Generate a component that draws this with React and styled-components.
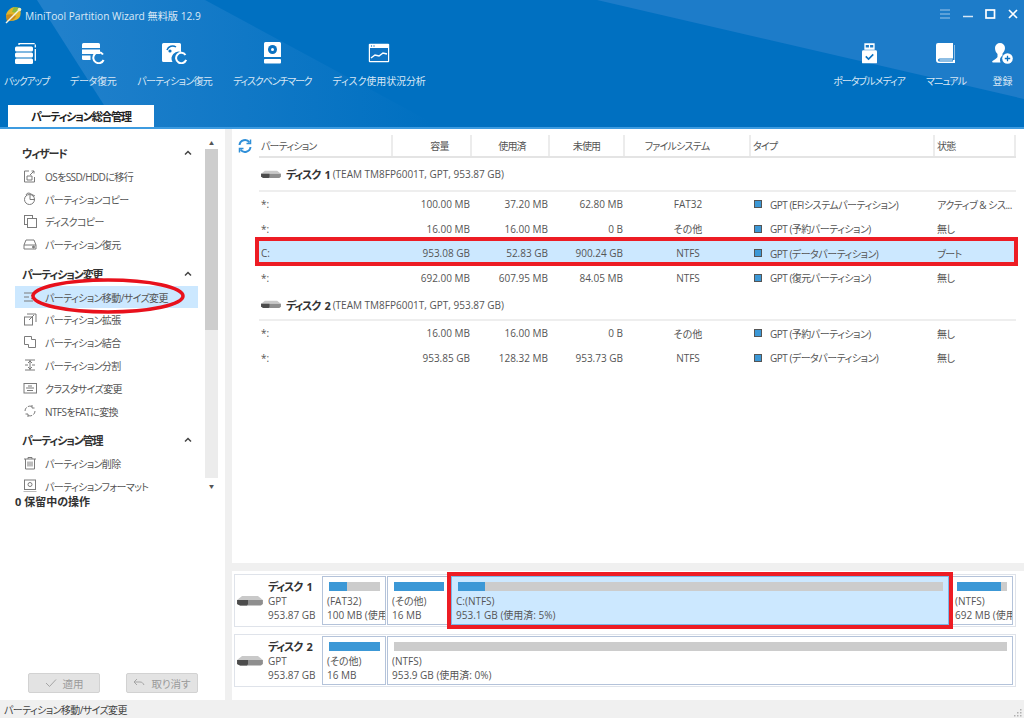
import styled, { createGlobalStyle } from 'styled-components';

const GlobalStyle = createGlobalStyle`
  html, body {
    margin: 0;
    padding: 0;
    background: #f0f0f0;
    overflow: hidden;
  }
  * {
    box-sizing: border-box;
  }
  body {
    font-family: "Open Sans", "Noto Sans CJK JP", sans-serif;
    font-feature-settings: "palt";
    font-size: 10px;
    color: #555;
  }
`;

/* toolbar icons */
const BackupIcon = () => (
  <svg width="22" height="21" viewBox="0 0 22 21" fill="#fff">
    <rect x="0" y="3.500" width="18" height="5" rx="1.500" />
    <rect x="0" y="9.500" width="18" height="5" rx="1.500" />
    <rect x="0" y="15.500" width="18" height="5.500" rx="1.500" />
    <path d="M4 2V.7h16.300v17" fill="none" stroke="#fff" strokeWidth="1.300" strokeDasharray="17 1.500 3 1.500" />
  </svg>
);

const DataIcon = () => (
  <svg width="23" height="22" viewBox="0 0 23 22" fill="#fff">
    <path d="M0 2.500A1.500 1.500 0 0 1 1.500 1h15A1.500 1.500 0 0 1 18 2.500V6H0z" />
    <rect x="0" y="7.500" width="18" height="4.500" />
    <path d="M0 13.500h8.500V18H1.500A1.500 1.500 0 0 1 0 16.500z" />
    <path d="M21 12.500a5.400 5.400 0 1 0 .6 5.500" fill="none" stroke="#fff" strokeWidth="2" />
  </svg>
);

const PartitionIcon = () => (
  <svg width="25" height="22" viewBox="0 0 25 22" fill="#fff">
    <path d="M0 2.500A1.500 1.500 0 0 1 1.500 1h16A1.500 1.500 0 0 1 19 2.500V10a7 7 0 0 0-8.500 10H1.500A1.500 1.500 0 0 1 0 18.500z" />
    <path d="M5 8a6 6 0 0 1 9-3" fill="none" stroke="#0a72c2" strokeWidth="1.500" />
    <circle cx="8" cy="9" r="1.600" fill="#0a72c2" />
    <path d="M23.500 13a5.200 5.200 0 1 0 .6 5" fill="none" stroke="#fff" strokeWidth="2" />
  </svg>
);

const BenchIcon = () => (
  <svg width="17" height="22" viewBox="0 0 17 22" fill="#fff">
    <path d="M1.500 0h14A1.500 1.500 0 0 1 17 1.500V15H0V1.500A1.500 1.500 0 0 1 1.500 0z" />
    <rect x="0" y="17" width="17" height="4.500" rx="1" />
    <circle cx="8.500" cy="7.500" r="4.500" fill="#0a72c2" />
    <circle cx="8.500" cy="7.500" r="1.500" fill="#fff" />
  </svg>
);

const UsageIcon = () => (
  <svg width="22" height="20" viewBox="0 0 22 20">
    <rect x="0.800" y="0.800" width="20.400" height="18.400" rx="1" fill="#fff" />
    <rect x="2" y="5" width="18" height="13" fill="#0f74c4" />
    <circle cx="3.500" cy="3" r="0.700" fill="#0f74c4" />
    <circle cx="6" cy="3" r="0.700" fill="#0f74c4" />
    <path d="M3 15l4-3 4 1 4-3 4 1" fill="none" stroke="#fff" strokeWidth="1.500" />
  </svg>
);

const UsbIcon = () => (
  <svg width="15" height="21" viewBox="0 0 16 22" fill="#fff">
    <path d="M2.500 0h11v7h-11zM4 2v2.500h3.400V2zM8.600 2v2.500H12V2z" fillRule="evenodd" />
    <path d="M1.500 7.500h13A1.500 1.500 0 0 1 16 9v11.500a1 1 0 0 1-1 1H1a1 1 0 0 1-1-1V9a1.500 1.500 0 0 1 1.500-1.500z" />
    <path d="M4 14l3 3 5-5" fill="none" stroke="#0a72c2" strokeWidth="1.700" />
  </svg>
);

const BookIcon = () => (
  <svg width="20" height="21" viewBox="0 0 20 21" fill="#fff">
    <path d="M2 0h15v15.500H3.500a1.500 1.500 0 0 0 0 3H17v-1.500h1.500V2h.5v18H3a3 3 0 0 1-3-3V2a2 2 0 0 1 2-2z" />
    <rect x="3.500" y="16.500" width="13" height="1" />
  </svg>
);

const UserIcon = () => (
  <svg width="21" height="21" viewBox="0 0 21 21" fill="#fff">
    <path d="M8 0a5 5 0 0 1 5 5c0 2.500-1.500 4.500-2.500 5.500v2a6 6 0 0 0-2 7H1c-1 0-1-1-.5-1.500 1-1 4.500-2.500 5-4v-3C4 9.500 3 7.500 3 5a5 5 0 0 1 5-5z" />
    <circle cx="15.500" cy="15.500" r="5.300" />
    <path d="M12.800 15.500h5.400M15.500 12.800v5.400" stroke="#0a72c2" strokeWidth="1.300" />
  </svg>
);

const Logo = () => (
  <svg width="18" height="18" viewBox="0 0 18 18">
    <path d="M1 9c1-4 4-7 8-8l6 1c1 4 1 8-1 10-3 3-8 3-12 3z" fill="#e2b52a" />
    <path d="M1 9c3-1 7-1 10 1-1 3-4 5-9 5z" fill="#c98a1c" />
    <path d="M9 1l6 1-3 5-5-1z" fill="#8cb93e" />
    <path d="M1 17L14 4" stroke="#f3f3e6" strokeWidth="1.400" />
    <circle cx="14.500" cy="3.500" r="1.800" fill="#f6efc0" />
  </svg>
);

/* sidebar icons */
const stroke = { fill: 'none', stroke: '#7b7b7b', strokeWidth: 1 };

const sideIcons = {
  migrate: <g {...stroke}><path d="M6 2H1.500v11H11.500V8" /><path d="M4 11V7h5v4zM7 6l4-4M8.500 2H11v2.500" /></g>,
  copy: <g {...stroke}><circle cx="6.500" cy="7.500" r="5" /><path d="M7 7.500V2.500M7 7.500h5M3 3a3 3 0 0 1 3-2l6 3" /></g>,
  disk: <g {...stroke}><rect x="1.500" y="1.500" width="8" height="9" /><rect x="4.500" y="4.500" width="9" height="9" fill="#fff" /></g>,
  recover: <g {...stroke}><path d="M3 3h8l2 5v4H1V8z" /><path d="M1 8h12" /><circle cx="10.500" cy="10" r="1" fill="#7b7b7b" /></g>,
  move: <g {...stroke}><path d="M1 3h9M1 7h5M1 11h9M8 5l3 2-3 2" /></g>,
  extend: <g {...stroke}><rect x="1.500" y="5" width="8" height="8" /><path d="M4 2h9v8M6 8l5-5" /></g>,
  merge: <g {...stroke}><path d="M1.500 1.500h7v3h4v8h-7v-3h-4z" /></g>,
  split: <g {...stroke}><path d="M2 2h10M2 12h10M7 2v10M5 5l2-2 2 2M5 9l2 2 2-2M2 7h3M9 7h3" /></g>,
  cluster: <g {...stroke}><rect x="1" y="2.500" width="12.500" height="9.500" /><path d="M3 7h8M5 5h4M4 9.500h6" /></g>,
  convert: <g {...stroke}><path d="M2 7a5 5 0 0 1 7-4.500M12 7a5 5 0 0 1-7 4.500" strokeDasharray="4 1.500" /><path d="M9 1v3h2.500M5 13v-3H2.500" /></g>,
  trash: <g {...stroke}><path d="M1 3h12M5 3V1.500h4V3M2.500 3v10h9V3M5 5.500v5M7 5.500v5M9 5.500v5" /></g>,
  format: <g {...stroke}><rect x="1.500" y="1" width="11" height="9.500" /><circle cx="7" cy="5.500" r="2" /><path d="M0.500 13h13" /></g>,
};

const SideIcon = ({ name }) => (
  <svg width="15" height="15" viewBox="0 0 15 15">{sideIcons[name]}</svg>
);

const Chevron = () => (
  <svg width="8" height="6" viewBox="0 0 8 6">
    <path d="M1 4.500l3-3 3 3" fill="none" stroke="#444" strokeWidth="1.500" />
  </svg>
);

const DiskGlyph = ({ width = 20 }) => (
  <svg width={width} height={width * 0.42} viewBox="0 0 26 11">
    <path d="M0 5L5 1h16l5 4z" fill="#c9c9c9" />
    <path d="M0 5h26v4l-2 1.500H3L0 9z" fill="#8e8e8e" />
    <path d="M0 5h11v4l-1 1.500H3L0 9z" fill="#4c4c4c" />
  </svg>
);

const tools = [
  { label: 'バックアップ', icon: <BackupIcon />, track: -1.3 },
  { label: 'データ復元', icon: <DataIcon />, track: -0.3 },
  { label: 'パーティション復元', icon: <PartitionIcon />, track: -0.7 },
  { label: 'ディスクベンチマーク', icon: <BenchIcon />, track: -1.2 },
  { label: 'ディスク使用状況分析', icon: <UsageIcon />, track: -0.1 },
];

const rightTools = [
  { label: 'ポータブルメディア', icon: <UsbIcon />, track: -1 },
  { label: 'マニュアル', icon: <BookIcon />, track: -1 },
  { label: '登録', icon: <UserIcon />, track: 0, min: 31 },
];

const sections = [
  {
    title: 'ウィザード',
    items: [
      { icon: 'migrate', label: 'OSをSSD/HDDに移行' },
      { icon: 'copy', label: 'パーティションコピー' },
      { icon: 'disk', label: 'ディスクコピー' },
      { icon: 'recover', label: 'パーティション復元' },
    ],
  },
  {
    title: 'パーティション変更',
    items: [
      { icon: 'move', label: 'パーティション移動/サイズ変更', active: true },
      { icon: 'extend', label: 'パーティション拡張' },
      { icon: 'merge', label: 'パーティション結合' },
      { icon: 'split', label: 'パーティション分割' },
      { icon: 'cluster', label: 'クラスタサイズ変更' },
      { icon: 'convert', label: 'NTFSをFATに変換' },
    ],
  },
  {
    title: 'パーティション管理',
    items: [
      { icon: 'trash', label: 'パーティション削除' },
      { icon: 'format', label: 'パーティションフォーマット' },
    ],
  },
];

const disks = [
  {
    name: 'ディスク 1',
    detail: '(TEAM TM8FP6001T, GPT, 953.87 GB)',
    height: 34,
    rows: [
      ['*:', '100.00 MB', '37.20 MB', '62.80 MB', 'FAT32', 'GPT (EFIシステムパーティション)', 'アクティブ & シス...'],
      ['*:', '16.00 MB', '16.00 MB', '0 B', 'その他', 'GPT (予約パーティション)', '無し'],
      ['C:', '953.08 GB', '52.83 GB', '900.24 GB', 'NTFS', 'GPT (データパーティション)', 'ブート', true],
      ['*:', '692.00 MB', '607.95 MB', '84.05 MB', 'NTFS', 'GPT (復元パーティション)', '無し'],
    ],
  },
  {
    name: 'ディスク 2',
    detail: '(TEAM TM8FP6001T, GPT, 953.87 GB)',
    height: 31,
    rows: [
      ['*:', '16.00 MB', '16.00 MB', '0 B', 'その他', 'GPT (予約パーティション)', '無し'],
      ['*:', '953.85 GB', '128.32 MB', '953.73 GB', 'NTFS', 'GPT (データパーティション)', '無し'],
    ],
  },
];

const maps = [
  {
    name: 'ディスク 1',
    parts: [
      { width: 64, used: 36, title: '(FAT32)', size: '100 MB (使用済' },
      { width: 63, used: 100, title: '(その他)', size: '16 MB' },
      { width: 498, used: 5.500, title: 'C:(NTFS)', size: '953.1 GB (使用済: 5%)', selected: true },
      { width: 63, used: 88, title: '(NTFS)', size: '692 MB (使用済' },
    ],
  },
  {
    name: 'ディスク 2',
    parts: [
      { width: 64, used: 100, title: '(その他)', size: '16 MB' },
      { flex: true, used: 0, title: '(NTFS)', size: '953.9 GB (使用済: 0%)' },
    ],
  },
];

const App = () => {
  return (
    <>
      <GlobalStyle />
      <Page>
        <Header>
          <TitleBar>
            <Logo />
            <Title>MiniTool Partition Wizard 無料版 12.9</Title>
            <WindowButtons>
              <svg width="78" height="12" viewBox="0 0 78 12" fill="none" stroke="#d5e6f5">
                <path d="M0 1h10M0 5h10M0 9h10" opacity="0.700" />
                <path d="M23 7.500h10" strokeWidth="1.500" />
                <rect x="46" y="1" width="8.500" height="8" strokeWidth="1.700" stroke="#fff" />
                <path d="M69 1l8 8M77 1l-8 8" strokeWidth="1.700" stroke="#fff" />
              </svg>
            </WindowButtons>
          </TitleBar>
          <Toolbar>
            <ToolGroup>
              {tools.map((t) => (
                <Tool key={t.label}>
                  <ToolIcon>{t.icon}</ToolIcon>
                  <ToolLabel $track={t.track}>{t.label}</ToolLabel>
                </Tool>
              ))}
            </ToolGroup>
            <ToolGroup>
              {rightTools.map((t) => (
                <Tool key={t.label} $min={t.min}>
                  <ToolIcon>{t.icon}</ToolIcon>
                  <ToolLabel $track={t.track}>{t.label}</ToolLabel>
                </Tool>
              ))}
            </ToolGroup>
          </Toolbar>
          <TabRow>
            <Tab>パーティション総合管理</Tab>
          </TabRow>
        </Header>

        <Body>
          <Sidebar>
            <SideScroll>
              <SideList>
                {sections.map((s) => (
                  <Section key={s.title}>
                    <SectionTitle>
                      {s.title}
                      <Chevron />
                    </SectionTitle>
                    {s.items.map((item) => (
                      <SideItem key={item.label} $active={item.active}>
                        <SideIcon name={item.icon} />
                        {item.label}
                      </SideItem>
                    ))}
                  </Section>
                ))}
                <Ellipse width="158" height="38" viewBox="0 0 158 38">
                  <ellipse cx="79" cy="19" rx="75" ry="16" fill="none" stroke="#e8111c" strokeWidth="3.500" />
                </Ellipse>
              </SideList>
              <ScrollBar>
                <ScrollArrow>▲</ScrollArrow>
                <ScrollTrack>
                  <ScrollThumb />
                </ScrollTrack>
                <ScrollArrow>▼</ScrollArrow>
              </ScrollBar>
            </SideScroll>
            <Pending>0 保留中の操作</Pending>
            <SideActions>
              <ActionButton disabled>
                <svg width="12" height="10" viewBox="0 0 12 10">
                  <path d="M1 5l3.500 3.500L11 1.500" fill="none" stroke="#a5a5a5" />
                </svg>
                適用
              </ActionButton>
              <ActionButton disabled>
                <svg width="12" height="10" viewBox="0 0 12 10">
                  <path d="M4 1L1 4l3 3M1 4h6c2 0 3 1 4 3" fill="none" stroke="#a5a5a5" />
                </svg>
                取り消す
              </ActionButton>
            </SideActions>
          </Sidebar>

          <Main>
            <TablePanel>
              <Refresh>
                <svg width="14" height="14" viewBox="0 0 14 14" fill="none" stroke="#2f8fd8" strokeWidth="2">
                  <path d="M1.500 6a5.500 5.500 0 0 1 10-2.500M12.500 8a5.500 5.500 0 0 1-10 2.500" />
                  <path d="M12.500 .5v4h-4M1.500 13.500v-4h4" strokeWidth="1.500" />
                </svg>
              </Refresh>
              <Table>
                <HeadRow>
                  <HeadCell>パーティション</HeadCell>
                  <HeadCell $center $shift={16}>容量</HeadCell>
                  <HeadCell $center $shift={4}>使用済</HeadCell>
                  <HeadCell $center>未使用</HeadCell>
                  <HeadCell $center $shift={-20}>ファイルシステム</HeadCell>
                  <HeadCell>タイプ</HeadCell>
                  <HeadCell>状態</HeadCell>
                </HeadRow>
                {disks.map((d) => (
                  <div key={d.name}>
                    <DiskRow $height={d.height}>
                      <DiskGlyph />
                      <DiskName>{d.name}</DiskName>
                      {d.detail}
                    </DiskRow>
                    {d.rows.map((r, i) => (
                      <Row key={i} $selected={r[7]}>
                        <Cell>{r[0]}</Cell>
                        <Cell $right>{r[1]}</Cell>
                        <Cell $right>{r[2]}</Cell>
                        <Cell $right>{r[3]}</Cell>
                        <Cell $center>{r[4]}</Cell>
                        <Cell $tight>
                          <TypeSquare />
                          {r[5]}
                        </Cell>
                        <Cell $tight>{r[6]}</Cell>
                      </Row>
                    ))}
                  </div>
                ))}
              </Table>
            </TablePanel>

            <MapPanel>
              {maps.map((m) => (
                <DiskCard key={m.name}>
                  <DiskInfo>
                    <DiskGlyph width={26} />
                    <DiskText>
                      <strong>{m.name}</strong>
                      <span>GPT</span>
                      <span>953.87 GB</span>
                    </DiskText>
                  </DiskInfo>
                  <Parts>
                    {m.parts.map((p) => (
                      <Part key={p.title + p.size} $width={p.width} $flex={p.flex} $selected={p.selected}>
                        <Bar>
                          <BarFill style={{ width: `${p.used}%` }} />
                        </Bar>
                        <PartText>{p.title}</PartText>
                        <PartText>{p.size}</PartText>
                      </Part>
                    ))}
                  </Parts>
                </DiskCard>
              ))}
            </MapPanel>
          </Main>
        </Body>

        <StatusBar>
          パーティション移動/サイズ変更
          <Grip width="8" height="8" viewBox="0 0 8 8" fill="#b0b0b0">
            <rect x="6" y="0" width="1.500" height="1.500" />
            <rect x="3" y="3" width="1.500" height="1.500" />
            <rect x="6" y="3" width="1.500" height="1.500" />
            <rect x="0" y="6" width="1.500" height="1.500" />
            <rect x="3" y="6" width="1.500" height="1.500" />
            <rect x="6" y="6" width="1.500" height="1.500" />
          </Grip>
        </StatusBar>
      </Page>
    </>
  );
};

export default App;

const Page = styled.div`
  width: 1024px;
  height: 718px;
  display: flex;
  flex-direction: column;
  overflow: hidden;
`;

const Header = styled.header`
  position: relative;
  height: 129px;
  background: #0070c1;
  border-bottom: 2px solid #3d9be0;
  display: flex;
  flex-direction: column;
  overflow: hidden;

  &::before {
    content: '';
    position: absolute;
    inset: 0;
    background: linear-gradient(90deg, #2080cb 60px, rgba(0, 112, 193, 0) 430px);
    clip-path: polygon(37px 0, 205px 0, 440px 127px, 118px 127px);
  }

  &::after {
    content: '';
    position: absolute;
    inset: 0;
    background: #1d7cc9;
    clip-path: polygon(597px 0, 1024px 0, 1024px 99px);
  }
`;

const TitleBar = styled.div`
  position: relative;
  z-index: 1;
  height: 30px;
  padding: 0 6px 0 5px;
  display: flex;
  align-items: center;
  gap: 2px;
`;

const Title = styled.span`
  color: #dbe9f6;
  font-size: 10.2px;
`;

const WindowButtons = styled.div`
  margin-left: auto;
  display: flex;
  align-items: center;
`;

const Toolbar = styled.div`
  position: relative;
  z-index: 1;
  height: 59px;
  padding: 11px 6px 0 4px;
  display: flex;
  justify-content: space-between;
`;

const ToolGroup = styled.div`
  display: flex;
  gap: 21px;
`;

const Tool = styled.div`
  min-width: ${({ $min }) => $min || 0}px;
  display: flex;
  flex-direction: column;
  align-items: center;
`;

const ToolIcon = styled.div`
  height: 24px;
  display: flex;
  align-items: center;
  justify-content: center;
`;

const ToolLabel = styled.span`
  margin-top: 8px;
  color: #d7e6f4;
  font-size: 10px;
  letter-spacing: ${({ $track }) => $track}px;
  line-height: 16px;
  white-space: nowrap;
`;

const TabRow = styled.div`
  position: relative;
  z-index: 1;
  margin-top: auto;
  padding-left: 8px;
  display: flex;
`;

const Tab = styled.div`
  width: 146px;
  height: 22px;
  background: #fff;
  color: #222;
  font-size: 11px;
  font-weight: 700;
  letter-spacing: -1.2px;
  display: flex;
  align-items: center;
  justify-content: center;
`;

const Body = styled.div`
  flex: 1;
  min-height: 0;
  display: flex;
  gap: 7px;
`;

const Sidebar = styled.aside`
  width: 225px;
  background: #fff;
  padding-top: 6px;
  padding-bottom: 7px;
  display: flex;
  flex-direction: column;
`;

const SideScroll = styled.div`
  height: 357px;
  display: flex;
`;

const SideList = styled.div`
  position: relative;
  width: 205px;
  overflow: hidden;
  padding-top: 6px;
  display: flex;
  flex-direction: column;
  gap: 5.500px;
`;

const Section = styled.section`
  display: flex;
  flex-direction: column;
`;

const SectionTitle = styled.div`
  height: 24px;
  padding: 0 13px 0 22px;
  color: #333;
  font-size: 11px;
  font-weight: 700;
  letter-spacing: -1.2px;
  display: flex;
  align-items: center;
  justify-content: space-between;
`;

const SideItem = styled.div`
  flex: none;
  height: 22.800px;
  width: 183px;
  margin-left: 15px;
  padding-left: 8px;
  background: ${({ $active }) => ($active ? '#cce8ff' : 'transparent')};
  color: #555;
  font-size: 10px;
  letter-spacing: -0.6px;
  white-space: nowrap;
  display: flex;
  align-items: center;
  gap: 7px;
`;

const Ellipse = styled.svg`
  position: absolute;
  left: 29px;
  top: 142px;
`;

const ScrollBar = styled.div`
  width: 13px;
  display: flex;
  flex-direction: column;
  align-items: stretch;
`;

const ScrollArrow = styled.div`
  height: 14px;
  font-size: 5px;
  color: #555;
  display: flex;
  align-items: center;
  justify-content: center;
`;

const ScrollTrack = styled.div`
  flex: 1;
  background: #ececec;
`;

const ScrollThumb = styled.div`
  height: 181px;
  background: #cdcdcd;
`;

const Pending = styled.div`
  margin-top: 2px;
  padding-left: 15px;
  color: #333;
  font-size: 11px;
  font-weight: 700;
  line-height: 16px;
`;

const SideActions = styled.div`
  margin-top: auto;
  padding-left: 28px;
  display: flex;
  gap: 26px;
`;

const ActionButton = styled.button`
  width: 72px;
  height: 20px;
  padding: 0;
  background: #e3e3e3;
  border: 1px solid #d2d2d2;
  border-radius: 2px;
  color: #9a9a9a;
  font: inherit;
  font-size: 10.5px;
  display: flex;
  align-items: center;
  justify-content: center;
  gap: 6px;
`;

const Main = styled.main`
  flex: 1;
  min-width: 0;
  display: flex;
  flex-direction: column;
  gap: 8px;
`;

const TablePanel = styled.div`
  flex: 1;
  min-height: 0;
  background: #fff;
  padding-top: 6px;
  display: flex;
`;

const Refresh = styled.div`
  width: 27px;
  padding: 4px 0 0 6px;
`;

const Table = styled.div`
  width: 757px;
`;

const columns = '134px 79px 78px 75px 126px 184px 81px';

const HeadRow = styled.div`
  height: 23px;
  display: grid;
  grid-template-columns: ${columns};
  border-bottom: 2px solid #e4e4e4;
`;

const HeadCell = styled.div`
  padding: 0 ${({ $shift }) => ($shift < 0 ? -$shift : 0)}px 0 ${({ $center, $shift }) => ($center ? ($shift > 0 ? $shift : 0) : 2)}px;
  border-right: 2px solid #ececec;
  color: #555;
  font-size: 10px;
  letter-spacing: -0.8px;
  display: flex;
  align-items: center;
  justify-content: ${({ $center }) => ($center ? 'center' : 'flex-start')};
  white-space: nowrap;
`;

const DiskRow = styled.div`
  height: ${({ $height }) => $height}px;
  padding-left: 2px;
  border-bottom: 2px solid #eeeeee;
  color: #555;
  font-size: 10px;
  display: flex;
  align-items: center;
  white-space: nowrap;
`;

const DiskName = styled.strong`
  margin: 0 3px 0 5px;
  color: #333;
  font-size: 11px;
  letter-spacing: -1.2px;
  word-spacing: 3px;
`;

const Row = styled.div`
  position: relative;
  height: 24.500px;
  display: grid;
  grid-template-columns: ${columns};
  align-items: center;
  background: ${({ $selected }) => ($selected ? '#cce8ff' : 'transparent')};

  &::after {
    content: ${({ $selected }) => ($selected ? "''" : 'none')};
    position: absolute;
    inset: -4px -2px -0.5px -4px;
    border: 4px solid #ed1c24;
  }
`;

const Cell = styled.div`
  padding: 0 2px;
  color: #555;
  font-size: 10px;
  letter-spacing: ${({ $tight }) => ($tight ? '-0.5px' : '0')};
  text-align: ${({ $right, $center }) => ($right ? 'right' : $center ? 'center' : 'left')};
  white-space: nowrap;
  overflow: hidden;
  display: ${({ $right, $center }) => ($right || $center ? 'block' : 'flex')};
  align-items: center;
`;

const TypeSquare = styled.i`
  width: 8px;
  height: 8px;
  margin: 0 8px 0 1px;
  background: #3c98d6;
  border: 1px solid #555;
`;

const MapPanel = styled.div`
  height: 129px;
  background: #fff;
  padding: 3px 8px 0 2px;
  display: flex;
  flex-direction: column;
  gap: 7px;
`;

const DiskCard = styled.div`
  height: 53px;
  border: 1px solid #dfe3ea;
  display: flex;
  align-items: center;
`;

const DiskInfo = styled.div`
  width: 87px;
  padding-left: 2px;
  display: flex;
  align-items: center;
  gap: 5px;
`;

const DiskText = styled.div`
  display: flex;
  flex-direction: column;
  color: #555;
  font-size: 10px;
  line-height: 14px;
  white-space: nowrap;

  strong {
    color: #333;
    font-size: 11px;
    letter-spacing: -1.2px;
    word-spacing: 3px;
  }
`;

const Parts = styled.div`
  flex: 1;
  min-width: 0;
  padding-right: 2px;
  display: flex;
  gap: 1px;
`;

const Part = styled.div`
  position: relative;
  z-index: ${({ $selected }) => ($selected ? 1 : 0)};
  flex: ${({ $flex }) => ($flex ? '1' : 'none')};
  width: ${({ $width }) => ($width ? `${$width}px` : 'auto')};
  height: 49px;
  padding: 5px 4px 0;
  background: ${({ $selected }) => ($selected ? '#cce8ff' : '#fff')};
  border: 1px solid ${({ $selected }) => ($selected ? '#7ab8e8' : '#b4c3da')};
  outline: ${({ $selected }) => ($selected ? '4px solid #ed1c24' : 'none')};
  overflow: hidden;
`;

const Bar = styled.div`
  height: 9px;
  margin: 0 1px 4px 2px;
  background: #cccccc;
`;

const BarFill = styled.div`
  height: 100%;
  background: #3c98d6;
`;

const PartText = styled.div`
  color: #555;
  font-size: 10px;
  line-height: 13.500px;
  white-space: nowrap;
`;

const StatusBar = styled.footer`
  position: relative;
  height: 18px;
  padding-left: 4px;
  background: #f0f0f0;
  color: #444;
  font-size: 10px;
  letter-spacing: -0.6px;
  display: flex;
  align-items: center;
`;

const Grip = styled.svg`
  position: absolute;
  right: 2px;
  bottom: 1px;
`;
